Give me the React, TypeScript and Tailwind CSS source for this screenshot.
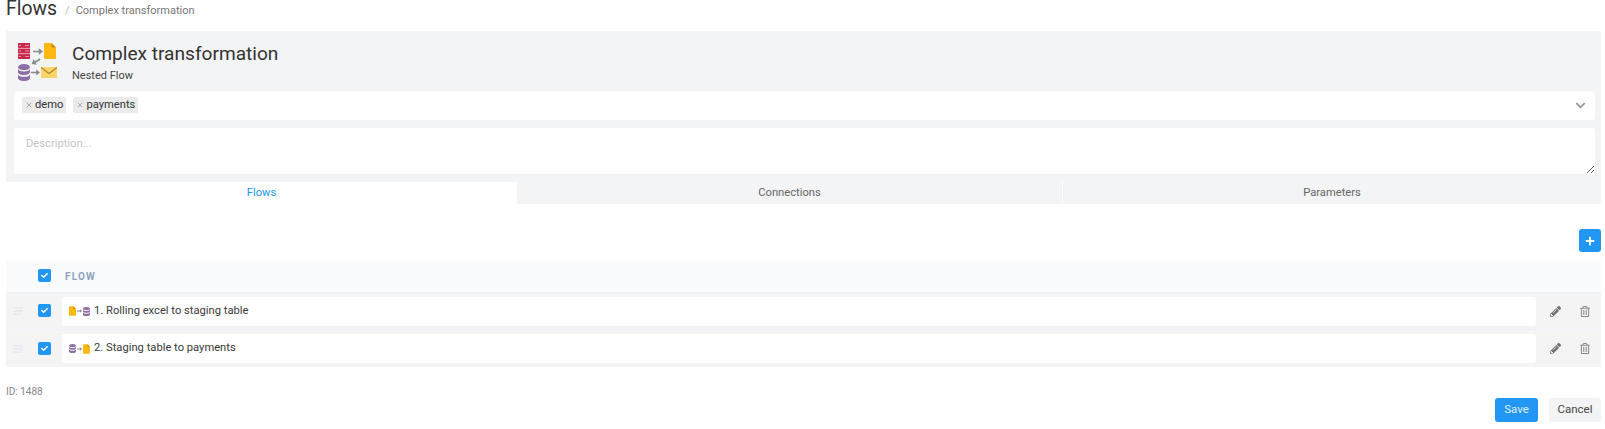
import React from 'react';
import { X } from 'lucide-react';
import { FaBars, FaCheck, FaChevronDown, FaPencilAlt, FaPlus, FaRegTrashAlt } from 'react-icons/fa';

const roboto = "[font-family:Roboto,'Liberation_Sans',sans-serif]";

// small drawn icons used for the flow type pictures
function Doc({ className }: { className: string }) {
  return (
    <svg viewBox="0 0 12 16" className={className}>
      <path d="M0 1a1 1 0 0 1 1-1h6.5L12 4.5V15a1 1 0 0 1-1 1H1a1 1 0 0 1-1-1z" fill="#fdb813" />
      <path d="M7.5 0 12 4.5H8.5a1 1 0 0 1-1-1z" fill="#c98f0c" />
    </svg>
  );
}

function Database({ className }: { className: string }) {
  return (
    <svg viewBox="0 0 12 14" className={className} preserveAspectRatio="none">
      <ellipse cx="6" cy="2.5" rx="6" ry="2.5" fill="#8c6fa6" />
      <path d="M0 4.2c1 1.5 3.4 2 6 2s5-.5 6-2v2.3C12 8 9.3 9 6 9S0 8 0 6.5z" fill="#8c6fa6" />
      <path d="M0 8.6c1 1.5 3.4 2 6 2s5-.5 6-2v2.9C12 13 9.3 14 6 14s-6-1-6-2.5z" fill="#8c6fa6" />
    </svg>
  );
}

function Arrow({ className }: { className: string }) {
  return (
    <svg viewBox="0 0 12 8" className={className}>
      <path d="M0 3h7V0l5 4-5 4V5H0z" fill="#8a8a8a" />
    </svg>
  );
}

function Server({ className }: { className: string }) {
  return (
    <svg viewBox="0 0 12 15" className={className} preserveAspectRatio="none">
      <rect width="12" height="4.6" fill="#c9294c" />
      <rect y="5.2" width="12" height="4.6" fill="#c9294c" />
      <rect y="10.4" width="12" height="4.6" fill="#c9294c" />
      <path d="M1 2.3h2M7 2.3h4M1 7.5h2M7 7.5h4M1 12.7h2M7 12.7h4" stroke="#f0a8b8" strokeWidth="0.8" />
    </svg>
  );
}

function Envelope({ className }: { className: string }) {
  return (
    <svg viewBox="0 0 16 11" className={className}>
      <rect width="16" height="11" fill="#fdd36b" />
      <path d="M0 .5 8 6.5l8-6" fill="none" stroke="#a9842a" strokeWidth="1.1" />
    </svg>
  );
}

function FlowPicture() {
  return (
    <div className="flex w-[40px] flex-col mt-[2px]">
      <div className="flex h-[16px] items-center">
        <Server className="w-[12px] h-[16px]" />
        <Arrow className="ml-[3px] w-[10px] h-[7px]" />
        <Doc className="ml-[1px] w-[12px] h-[16px]" />
      </div>
      <div className="my-[-1px] flex h-[7px] items-center justify-center pr-[4px]">
        <Arrow className="w-[10px] h-[7px] rotate-[150deg]" />
      </div>
      <div className="flex h-[17px] items-center">
        <Database className="w-[12px] h-[17px]" />
        <Arrow className="ml-[1px] w-[9px] h-[7px]" />
        <Envelope className="ml-[1px] w-[16px] h-[11px]" />
      </div>
    </div>
  );
}

function Tag({ label }: { label: string }) {
  return (
    <span className="flex h-[16px] items-center gap-[2px] rounded-[2px] bg-[#ebebeb] px-[3px] text-[11.2px] text-[#333333]">
      <X className="w-[8px] h-[8px] text-[#888888]" strokeWidth={2} />
      {label}
    </span>
  );
}

function Checkbox() {
  return (
    <span className="flex w-[13px] h-[13px] items-center justify-center rounded-[2px] bg-[#2196f3]">
      <FaCheck className="w-[7px] h-[7px] text-white" />
    </span>
  );
}

function FlowRow({ first, label }: { first: boolean; label: string }) {
  return (
    <div className="flex h-[37px] items-center border-b border-[#edf1f7] last:border-b-0 bg-[#f4f4f4] pr-[11px]">
      <FaBars className="ml-[7px] w-[10px] h-[10px] text-[#dfe6ef]" />
      <div className="ml-[15px] mb-[1px]"><Checkbox /></div>
      <div className="ml-[11px] flex h-[29px] flex-1 items-center rounded-[3px] bg-white pl-[7px] text-[11.2px] text-[#3a3a3a]">
        {first ? (
          <span className="flex items-center gap-[1px] mr-[4px]">
            <Doc className="w-[7px] h-[10px]" />
            <Arrow className="w-[5px] h-[4px]" />
            <Database className="w-[7px] h-[9px]" />
          </span>
        ) : (
          <span className="flex items-center gap-[1px] mr-[4px]">
            <Database className="w-[7px] h-[9px]" />
            <Arrow className="w-[5px] h-[4px]" />
            <Doc className="w-[7px] h-[10px]" />
          </span>
        )}
        {label}
      </div>
      <FaPencilAlt className="ml-[14px] w-[11px] h-[11px] text-[#707070]" />
      <FaRegTrashAlt className="ml-[19px] w-[10px] h-[11px] text-[#8a8a8a]" />
    </div>
  );
}

export default function App() {
  return (
    <div className={`${roboto} w-[1605px] h-[429px] overflow-hidden bg-white px-[6px] pr-[4px]`}>
      {/* Breadcrumb */}
      <div className="flex h-[31px] items-start">
        <span className="text-[19.4px] leading-[18px] text-[#333333]">Flows</span>
        <span className="ml-[8px] mt-[4px] text-[11px] leading-[14px] text-[#bbbbbb]">/</span>
        <span className="ml-[6px] mt-[4px] text-[11px] leading-[14px] text-[#777777]">Complex transformation</span>
      </div>

      {/* Header panel */}
      <div className="bg-[#f3f4f6]">
        <div className="flex h-[60px] items-center pl-[12px]">
          <FlowPicture />
          <div className="ml-[14px] mt-[3px]">
            <div className="text-[19.1px] leading-[24px] text-[#333333]">Complex transformation</div>
            <div className="mt-[3px] text-[11px] leading-[14px] text-[#444444]">Nested Flow</div>
          </div>
        </div>
        <div className="px-[8px] pr-[6px]">
          <div className="flex h-[29px] items-center gap-[7px] rounded-[3px] bg-white pb-[1px] pl-[8px] pr-[9px]">
            <Tag label="demo" />
            <Tag label="payments" />
            <FaChevronDown className="ml-auto w-[11px] h-[11px] text-[#999999]" />
          </div>
          <textarea
            readOnly
            placeholder="Description..."
            className="mt-[8px] block h-[46px] w-full rounded-[3px] bg-white px-[12px] py-[8px] text-[11.2px] text-[#333333] outline-none placeholder:text-[#c4c4c4]"
          />
        </div>
        {/* Tabs */}
        <div className="mt-[8px] flex h-[22px] text-[11.2px] text-[#666666]">
          <div className="flex w-[511px] items-center justify-center bg-white text-[#2196f3]">Flows</div>
          <div className="flex w-[546px] items-center justify-center border-r border-[#ffffff]">Connections</div>
          <div className="flex flex-1 items-center justify-center">Parameters</div>
        </div>
      </div>

      <div className="mt-[25px] flex justify-end">
        <button className="flex w-[22px] h-[23px] items-center justify-center rounded-[3px] bg-[#2196f3]">
          <FaPlus className="w-[10px] h-[10px] text-white" />
        </button>
      </div>

      {/* Flow table */}
      <div className="mt-[8px]">
        <div className="flex h-[33px] items-center border-b border-[#edf1f7] bg-[#f9fafc]">
          <div className="ml-[32px] mb-[1px]"><Checkbox /></div>
          <span className="ml-[14px] text-[10px] font-bold tracking-[1.2px] text-[#8fa3c0]">FLOW</span>
        </div>
        <FlowRow first label="1. Rolling excel to staging table" />
        <FlowRow first={false} label="2. Staging table to payments" />
      </div>

      {/* Footer */}
      <div className="flex items-start">
        <span className="mt-[18px] text-[10px] leading-[14px] text-[#888888]">ID: 1488</span>
        <div className="ml-auto mt-[31px] flex gap-[11px]">
          <button className="w-[43px] h-[24px] rounded-[3px] bg-[#2196f3] text-[11.5px] text-white/85">Save</button>
          <button className="w-[52px] h-[24px] rounded-[3px] bg-[#f3f4f6] text-[11.5px] text-[#444444]">Cancel</button>
        </div>
      </div>
    </div>
  );
}
